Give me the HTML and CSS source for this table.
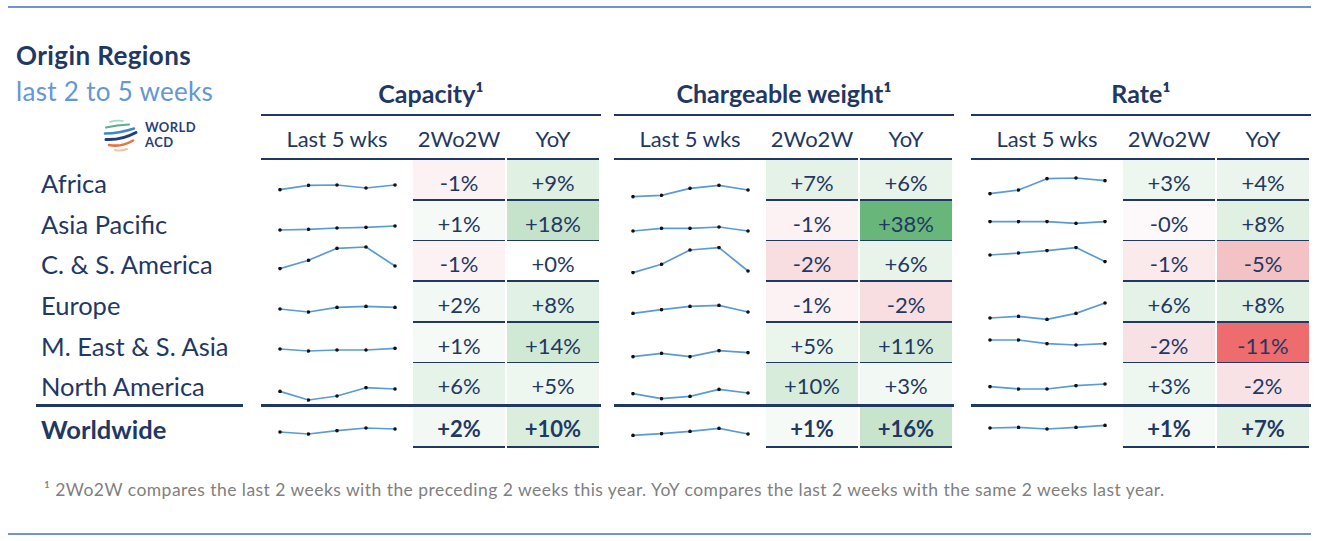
FILE: index.html
```html
<!DOCTYPE html>
<html lang="en">
<head>
<meta charset="utf-8">
<title>Origin Regions</title>
<link rel="stylesheet" href="styles.css">
</head>
<body>
<svg class="defs" width="0" height="0" aria-hidden="true">
  <defs>
    <marker id="dot" viewBox="0 0 4 4" refX="2" refY="2" markerWidth="4" markerHeight="4" markerUnits="userSpaceOnUse">
      <circle cx="2" cy="2" r="1.8" fill="#111"/>
    </marker>
  </defs>
</svg>
<div class="page">
  <div class="rule"></div>
  <div class="board">
    <div class="side">
      <div class="intro">
        <h1 class="title">Origin Regions</h1>
        <p class="subtitle">last 2 to 5 weeks</p>
      </div>
      <div class="logo-row">
        <svg class="logo-mark" width="36" height="34" viewBox="0 0 36 34">
          <g fill="none" stroke-linecap="round">
            <path d="M7 4 Q13 2 20 3" stroke="#a9d7bf" stroke-width="1.6"/>
            <path d="M3 9.5 Q14 7 26 6.5" stroke="#5cae8e" stroke-width="2.2"/>
            <path d="M2 15.5 Q16 15.5 31 10.5" stroke="#3f86c8" stroke-width="2.6"/>
            <path d="M3 21.5 Q18 22.5 33 14.5" stroke="#233d7a" stroke-width="3"/>
            <path d="M6 27 Q18 29.5 30 22.5" stroke="#e9733f" stroke-width="2.6"/>
            <path d="M12 32 Q18 33.5 24 31" stroke="#f6c3a0" stroke-width="2"/>
          </g>
        </svg>
        <div class="logo-text"><span>WORLD</span><span>ACD</span></div>
      </div>
      <div class="label">Africa</div>
      <div class="label">Asia Pacific</div>
      <div class="label">C. &amp; S. America</div>
      <div class="label">Europe</div>
      <div class="label">M. East &amp; S. Asia</div>
      <div class="label">North America</div>
      <div class="label total">Worldwide</div>
    </div>

    <div class="group g1">
      <div class="gtitle">Capacity¹</div>
      <div class="ghead"><span class="h">Last 5 wks</span><span class="h">2Wo2W</span><span class="h v2">YoY</span></div>
      <div class="row"><svg class="spark"><polyline points="19,29.7 47.5,25.3 76,25 105,28 134,25"/></svg><div class="val" style="background:#fcf1f3">-1%</div><div class="val v2" style="background:#e0f0e3">+9%</div></div>
      <div class="row"><svg class="spark"><polyline points="19,29 47.5,28.3 76,27 105,26.3 134,25"/></svg><div class="val" style="background:#f6faf7">+1%</div><div class="val v2" style="background:#c5e3ca">+18%</div></div>
      <div class="row"><svg class="spark"><polyline points="19,27.6 47.5,19.3 76,7.3 105,6 134,25"/></svg><div class="val" style="background:#fcf1f3">-1%</div><div class="val v2" style="background:#ffffff">+0%</div></div>
      <div class="row"><svg class="spark"><polyline points="19,27 47.5,30 76,25.4 105,24.4 134,25.4"/></svg><div class="val" style="background:#f2f8f3">+2%</div><div class="val v2" style="background:#e2f1e5">+8%</div></div>
      <div class="row"><svg class="spark"><polyline points="19,26 47.5,28 76,27 105,27 134,25.3"/></svg><div class="val" style="background:#f6faf7">+1%</div><div class="val v2" style="background:#d0e9d4">+14%</div></div>
      <div class="row last"><svg class="spark"><polyline points="19,28.4 47.5,37 76,33 105,24.7 134,26"/></svg><div class="val" style="background:#e6f3e9">+6%</div><div class="val v2" style="background:#eef6f0">+5%</div></div>
      <div class="row total"><svg class="spark"><polyline points="19,25 47.5,27 76,23.7 105,21 134,22"/></svg><div class="val" style="background:#f2f8f3">+2%</div><div class="val v2" style="background:#dbeedd">+10%</div></div>
    </div>

    <div class="group g2">
      <div class="gtitle">Chargeable weight¹</div>
      <div class="ghead"><span class="h">Last 5 wks</span><span class="h">2Wo2W</span><span class="h v2">YoY</span></div>
      <div class="row"><svg class="spark"><polyline points="19,36.7 47.5,35.3 76,28.3 105,25.3 134,30"/></svg><div class="val" style="background:#e4f2e7">+7%</div><div class="val v2" style="background:#e8f4ea">+6%</div></div>
      <div class="row"><svg class="spark"><polyline points="19,30 47.5,27.3 76,27.3 105,26 134,30"/></svg><div class="val" style="background:#fcf1f3">-1%</div><div class="val v2" style="background:#68b679">+38%</div></div>
      <div class="row"><svg class="spark"><polyline points="19,31.6 47.5,23.3 76,9 105,6.6 134,30"/></svg><div class="val" style="background:#f8dee1">-2%</div><div class="val v2" style="background:#e8f4ea">+6%</div></div>
      <div class="row"><svg class="spark"><polyline points="19,31.4 47.5,27.7 76,24.4 105,23.4 134,30"/></svg><div class="val" style="background:#fcf1f3">-1%</div><div class="val v2" style="background:#f8dee1">-2%</div></div>
      <div class="row"><svg class="spark"><polyline points="19,33.7 47.5,30.3 76,33.7 105,27.7 134,29.7"/></svg><div class="val" style="background:#eaf5ec">+5%</div><div class="val v2" style="background:#d5ead8">+11%</div></div>
      <div class="row last"><svg class="spark"><polyline points="19,30.7 47.5,35.7 76,33.4 105,26.4 134,30"/></svg><div class="val" style="background:#d8ecdb">+10%</div><div class="val v2" style="background:#f2f8f3">+3%</div></div>
      <div class="row total"><svg class="spark"><polyline points="19,28.4 47.5,26.7 76,24.4 105,21.4 134,27"/></svg><div class="val" style="background:#f6faf7">+1%</div><div class="val v2" style="background:#c8e4cd">+16%</div></div>
    </div>

    <div class="group g3">
      <div class="gtitle">Rate¹</div>
      <div class="ghead"><span class="h">Last 5 wks</span><span class="h">2Wo2W</span><span class="h v2">YoY</span></div>
      <div class="row"><svg class="spark"><polyline points="19,33.7 47.5,30 76,18.7 105,18 134,20.7"/></svg><div class="val" style="background:#eef6f0">+3%</div><div class="val v2" style="background:#ebf5ed">+4%</div></div>
      <div class="row"><svg class="spark"><polyline points="19,20.6 47.5,20.6 76,20.6 105,22.3 134,20.6"/></svg><div class="val" style="background:#fdf8f9">-0%</div><div class="val v2" style="background:#e0f0e3">+8%</div></div>
      <div class="row"><svg class="spark"><polyline points="19,14 47.5,12 76,9.6 105,6.6 134,20.6"/></svg><div class="val" style="background:#fbeaec">-1%</div><div class="val v2" style="background:#f2c2c5">-5%</div></div>
      <div class="row"><svg class="spark"><polyline points="19,36 47.5,34.4 76,37.4 105,31.4 134,21"/></svg><div class="val" style="background:#e4f2e7">+6%</div><div class="val v2" style="background:#e0f0e3">+8%</div></div>
      <div class="row"><svg class="spark"><polyline points="19,17 47.5,17 76,20.7 105,22 134,20.7"/></svg><div class="val" style="background:#f8e1e4">-2%</div><div class="val v2" style="background:#ee6b6e">-11%</div></div>
      <div class="row last"><svg class="spark"><polyline points="19,23.7 47.5,26 76,26 105,22.7 134,21"/></svg><div class="val" style="background:#eef6f0">+3%</div><div class="val v2" style="background:#f9e2e5">-2%</div></div>
      <div class="row total"><svg class="spark"><polyline points="19,21 47.5,20.4 76,22 105,20.4 134,18.4"/></svg><div class="val" style="background:#f6faf7">+1%</div><div class="val v2" style="background:#e2f1e5">+7%</div></div>
    </div>
  </div>
  <p class="footnote">¹ 2Wo2W compares the last 2 weeks with the preceding 2 weeks this year. YoY compares the last 2 weeks with the same 2 weeks last year.</p>
  <div class="rule"></div>
</div>
</body>
</html>
```

FILE: styles.css
```css
* { box-sizing: border-box; }

html, body {
  margin: 0;
  padding: 0;
  background: #ffffff;
}

body {
  font-family: Lato, "Liberation Sans", sans-serif;
  color: #1f3864;
}

.defs {
  position: absolute;
  width: 0;
  height: 0;
}

.page {
  width: 1326px;
  height: 541px;
  padding-top: 6px;
}

.rule {
  height: 2px;
  width: 1303px;
  margin-left: 8px;
  background: #7093d3;
}

.board {
  display: flex;
  margin-left: 16px;
}

/* ---------- left column ---------- */
.side {
  width: 227px;
  display: flex;
  flex-direction: column;
}

.intro {
  height: 108px;
  padding-top: 29px;
}

.title {
  margin: 0;
  font-size: 26px;
  line-height: 36px;
  font-weight: 700;
  letter-spacing: 0.4px;
  color: #1f3864;
}

.subtitle {
  margin: 0;
  font-size: 26px;
  line-height: 36px;
  font-weight: 400;
  letter-spacing: 0.3px;
  color: #6497d3;
}

.logo-row {
  height: 44px;
  display: flex;
  align-items: flex-start;
  padding-top: 2px;
  padding-left: 87px;
  gap: 6px;
}

.logo-mark { display: block; }

.logo-text {
  display: flex;
  flex-direction: column;
  padding-top: 2px;
  font-size: 13px;
  line-height: 15px;
  font-weight: 700;
  letter-spacing: 0.4px;
  color: #2a3f78;
}

.label {
  height: 40.7px;
  display: flex;
  align-items: center;
  padding-left: 25px;
  padding-top: 5px;
  font-size: 25.5px;
  color: #1f3864;
}

.label.total {
  height: 42px;
  margin-left: 20px;
  padding-left: 5px;
  padding-top: 4px;
  border-top: 3px solid #1f3864;
  font-weight: 700;
}

/* ---------- metric groups ---------- */
.group {
  width: 340px;
  display: flex;
  flex-direction: column;
}

.g1 { margin-left: 18px; }
.g2 { margin-left: 13px; }
.g3 { margin-left: 17px; }

.gtitle {
  height: 108px;
  display: flex;
  align-items: flex-end;
  justify-content: center;
  padding-bottom: 7px;
  border-bottom: 2px solid #1f3864;
  font-size: 25px;
  line-height: 28px;
  font-weight: 700;
}

.ghead,
.row {
  display: grid;
  grid-template-columns: 152px 92px 2px 92px;
}

.ghead { height: 44px; }

.h {
  display: flex;
  align-items: center;
  justify-content: center;
  padding-top: 2px;
  border-bottom: 2px solid #1f3864;
  font-size: 22px;
}

.v2 { grid-column: 4; }

.row { height: 40.7px; }

.row.total {
  height: 42px;
  border-top: 3px solid #1f3864;
}

.spark {
  grid-column: 1;
  display: block;
  width: 152px;
  height: 41px;
  overflow: visible;
}

.spark polyline {
  fill: none;
  stroke: #5b9bd5;
  stroke-width: 1.7;
  stroke-linejoin: round;
  marker-start: url(#dot);
  marker-mid: url(#dot);
  marker-end: url(#dot);
}

.val {
  display: flex;
  align-items: center;
  justify-content: center;
  padding-top: 6px;
  border-bottom: 2px solid #1f3864;
  font-size: 22px;
}

.row.last .val {
  border-bottom: 0;
  padding-bottom: 2px;
}

.row.total .val {
  padding-top: 3px;
  font-weight: 700;
}

/* ---------- footnote ---------- */
.footnote {
  margin: 32px 0 31px 0;
  padding-left: 44px;
  font-size: 17.5px;
  line-height: 24px;
  letter-spacing: 0.46px;
  color: #7f7f7f;
}
```
